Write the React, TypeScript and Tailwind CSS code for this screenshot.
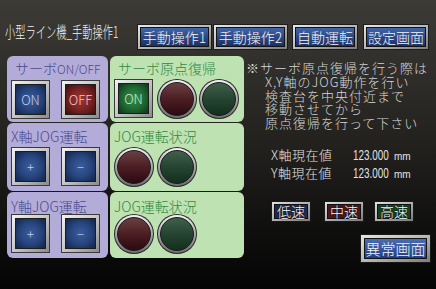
import React from "react";

function TopButton({ w, label }: { w: string; label: string }) {
  return (
    <div className={`h-[26px] p-[1px] bg-[#1c1c1c] ${w}`}>
      <div className="w-full h-full p-[2px] bg-linear-to-br from-[#e6e6e6] via-[#b8b8b8] to-[#7c7c7c]">
        <div className="w-full h-full border border-[#141414] bg-linear-to-b from-[#4364a6] via-[#2c4a88] to-[#1a3064] flex items-center justify-center text-[14px] leading-none text-[#f4f4f4] whitespace-nowrap">
          {label}
        </div>
      </div>
    </div>
  );
}

function SquareButton({ inner, text, label }: { inner: string; text: string; label: string }) {
  return (
    <div className="w-[39px] h-[39px] p-[1px] bg-[#3a3a3a]">
      <div className="w-full h-full p-[3px] bg-linear-to-br from-[#f2f2f2] via-[#c6c6c6] to-[#8a8a8a]">
        <div className={`w-full h-full border border-[#1c1c1c] flex items-center justify-center text-[13px] leading-none ${text} ${inner}`}>
          {label}
        </div>
      </div>
    </div>
  );
}

function Lamp({ inner }: { inner: string }) {
  return (
    <div className="w-[40px] h-[40px] rounded-full p-[1px] bg-[#2a2a2a]">
      <div className="w-full h-full rounded-full p-[2px] bg-linear-to-b from-[#f4f4f4] via-[#a8a8a8] to-[#6e6e6e]">
        <div className={`w-full h-full rounded-full border border-[#1a1a1a] ${inner}`} />
      </div>
    </div>
  );
}

function SpeedButton({ inner, label }: { inner: string; label: string }) {
  return (
    <div className="w-[40px] h-[21px] p-[1px] bg-[#1a1a1a]">
      <div className="w-full h-full p-[2px] bg-linear-to-br from-[#e0e0e0] via-[#b0b0b0] to-[#7a7a7a]">
        <div className={`w-full h-full border border-[#101010] flex items-center justify-center text-[14px] leading-none text-white [text-shadow:0_0_1px_#000,0_0_1px_#000] ${inner}`}>
          {label}
        </div>
      </div>
    </div>
  );
}

function ValueRow({ label }: { label: string }) {
  return (
    <div className="h-[18px] flex items-baseline pl-[25px] leading-[18px] text-[#e2e2e2] whitespace-nowrap">
      <div className="w-[82px] text-[13px] tracking-[0.5px]">{label}</div>
      <div className="w-[36px] text-[15px] font-['Liberation_Sans',sans-serif]">
        <span className="inline-block origin-left scale-x-[0.66]">123.000</span>
      </div>
      <div className="ml-[5px] text-[10px] font-['Liberation_Sans',sans-serif]">mm</div>
    </div>
  );
}

const BLUE = "bg-[radial-gradient(circle,#3a5ca0_0%,#28467f_50%,#12244a_100%)]";
const RED = "bg-[radial-gradient(circle,#a03434_0%,#7c2424_50%,#3c0e0e_100%)]";
const GREEN = "bg-[radial-gradient(circle,#33904a_0%,#216c34_50%,#0c3618_100%)]";
const LAMP_RED = "bg-linear-to-b from-[#6a4042] via-[#4c1e24] to-[#2c0a10]";
const LAMP_GREEN = "bg-linear-to-b from-[#40604c] via-[#254532] to-[#12301c]";

export default function App() {
  return (
    <div className="w-[436px] h-[289px] overflow-hidden bg-linear-to-b from-[#3c3b36] via-[#22211e] to-[#050505] font-['Noto_Sans_CJK_JP','Noto_Sans',sans-serif] font-light text-[14px]">
      <header className="h-[56px] flex items-start pt-[22px]">
        <div className="w-[137px] pl-[5px] leading-[18px] text-[#f2f2f2] whitespace-nowrap text-[16px]">
          <span className="inline-block origin-left scale-x-[0.64]">小型ライン機_手動操作1</span>
        </div>
        <div className="mt-[2px]">
          <TopButton w="w-[75px]" label="手動操作1" />
        </div>
        <div className="mt-[2px] ml-[1px]">
          <TopButton w="w-[75px]" label="手動操作2" />
        </div>
        <div className="mt-[2px] ml-[4px]">
          <TopButton w="w-[66px]" label="自動運転" />
        </div>
        <div className="mt-[2px] ml-[5px]">
          <TopButton w="w-[66px]" label="設定画面" />
        </div>
      </header>

      <main className="flex pl-[7px]">
        <div className="w-[101px] flex flex-col gap-[1px] text-[#4a4b8e]">
          <section className="h-[66px] rounded-[6px] bg-[#b3acd9] pt-[5px]">
            <div className="pl-[8px] leading-[14px] whitespace-nowrap">
              サーボ<span className="text-[12px]">ON/OFF</span>
            </div>
            <div className="mt-[4px] pl-[4px] flex gap-[11px]">
              <SquareButton inner={BLUE} text="text-[#c8d0e4]" label="ON" />
              <SquareButton inner={RED} text="text-[#f0caca]" label="OFF" />
            </div>
          </section>
          <section className="h-[68px] rounded-[6px] bg-[#b3acd9] pt-[6px]">
            <div className="pl-[4px] leading-[14px] whitespace-nowrap">X軸JOG運転</div>
            <div className="mt-[4px] pl-[4px] flex gap-[11px]">
              <SquareButton inner={BLUE} text="text-[#c8d0e4]" label="+" />
              <SquareButton inner={BLUE} text="text-[#c8d0e4]" label="−" />
            </div>
          </section>
          <section className="h-[66px] rounded-[6px] bg-[#b3acd9] pt-[7px]">
            <div className="pl-[4px] leading-[14px] whitespace-nowrap">Y軸JOG運転</div>
            <div className="mt-[1px] pl-[4px] flex gap-[11px]">
              <SquareButton inner={BLUE} text="text-[#c8d0e4]" label="+" />
              <SquareButton inner={BLUE} text="text-[#c8d0e4]" label="−" />
            </div>
          </section>
        </div>

        <div className="ml-[2px] w-[134px] flex flex-col gap-[1px] text-[#2f8a3f]">
          <section className="h-[66px] rounded-[6px] bg-[#bfe2b3] pt-[5px]">
            <div className="pl-[8px] leading-[14px] whitespace-nowrap">サーボ原点復帰</div>
            <div className="mt-[4px] pl-[4px] flex">
              <SquareButton inner={GREEN} text="text-[#cce8cc]" label="ON" />
              <div className="ml-[4px]"><Lamp inner={LAMP_RED} /></div>
              <div className="ml-[2px]"><Lamp inner={LAMP_GREEN} /></div>
            </div>
          </section>
          <section className="h-[68px] rounded-[6px] bg-[#bfe2b3] pt-[6px]">
            <div className="pl-[4px] leading-[14px] whitespace-nowrap">JOG運転状況</div>
            <div className="mt-[4px] pl-[4px] flex">
              <Lamp inner={LAMP_RED} />
              <div className="ml-[3px]"><Lamp inner={LAMP_GREEN} /></div>
            </div>
          </section>
          <section className="h-[66px] rounded-[6px] bg-[#bfe2b3] pt-[7px]">
            <div className="pl-[4px] leading-[14px] whitespace-nowrap">JOG運転状況</div>
            <div className="mt-[1px] pl-[4px] flex">
              <Lamp inner={LAMP_RED} />
              <div className="ml-[3px]"><Lamp inner={LAMP_GREEN} /></div>
            </div>
          </section>
        </div>

        <div className="ml-[2px] flex-1 flex flex-col">
          <p className="pt-[5px] pl-[19px] -indent-[19px] text-[13px] tracking-[1px] leading-[13.75px] text-[#d6d6d6] whitespace-nowrap">
            ※サーボ原点復帰を行う際は
            <br />
            X,Y軸のJOG動作を行い
            <br />
            検査台を中央付近まで
            <br />
            移動させてから
            <br />
            原点復帰を行って下さい
          </p>
          <div className="mt-[16px] flex flex-col">
            <ValueRow label="X軸現在値" />
            <ValueRow label="Y軸現在値" />
          </div>
          <div className="mt-[19px] pl-[25px] flex">
            <SpeedButton inner="bg-[#1c2a52]" label="低速" />
            <div className="ml-[13px]"><SpeedButton inner="bg-[#4c161a]" label="中速" /></div>
            <div className="ml-[10px]"><SpeedButton inner="bg-[#16401f]" label="高速" /></div>
          </div>
          <div className="mt-[12px] self-end mr-[5px] w-[71px] h-[29px] p-[1px] bg-[#1a1a1a]">
            <div className="w-full h-full p-[3px] bg-linear-to-br from-[#e6e6e6] via-[#b8b8b8] to-[#7c7c7c]">
              <div className="w-full h-full border border-[#141414] bg-linear-to-b from-[#4a6cb0] via-[#3556a0] to-[#223e80] flex items-center justify-center text-[15px] leading-none text-[#f6f6f6] whitespace-nowrap">
                異常画面
              </div>
            </div>
          </div>
        </div>
      </main>
    </div>
  );
}
